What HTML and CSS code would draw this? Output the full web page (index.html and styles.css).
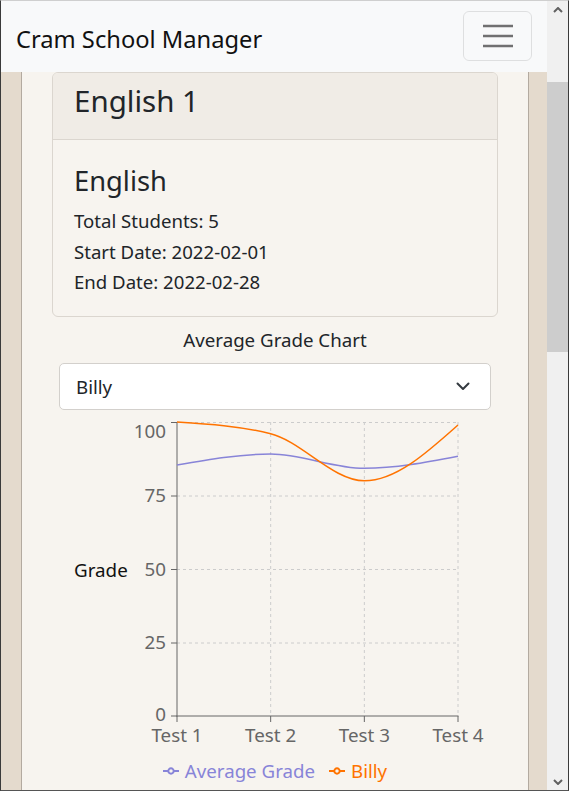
FILE: index.html
```html
<!DOCTYPE html>
<html lang="en">
<head>
<meta charset="utf-8">
<title>Cram School Manager</title>
<link rel="stylesheet" href="styles.css">
</head>
<body>
<div class="window">
  <div class="viewport">
    <nav class="navbar">
      <span class="brand">Cram School Manager</span>
      <button class="toggler" type="button" aria-label="Toggle navigation">
        <svg width="30" height="30" viewBox="0 0 30 30"><path d="M0 5h30M0 15h30M0 25h30" stroke="rgba(0,0,0,0.55)" stroke-width="2.7"/></svg>
      </button>
    </nav>
    <main class="page">
      <section class="card">
        <div class="card-header"><h3 class="card-heading">English 1</h3></div>
        <div class="card-body">
          <h4 class="card-title">English</h4>
          <p class="card-text">Total Students: 5</p>
          <p class="card-text">Start Date: 2022-02-01</p>
          <p class="card-text">End Date: 2022-02-28</p>
        </div>
      </section>
      <section class="chart-section">
        <div class="chart-title">Average Grade Chart</div>
        <div class="select">
          <span>Billy</span>
          <svg class="chev" width="16" height="16" viewBox="0 0 16 16"><path d="M2.5 5.5l5.5 5.5 5.5-5.5" fill="none" stroke="#343a40" stroke-width="2" stroke-linecap="round" stroke-linejoin="round"/></svg>
        </div>
      </section>
      <svg class="chart" width="505" height="345" viewBox="22 410 505 345">
        <g class="grid" stroke="#ccc" stroke-dasharray="3 3" fill="none">
          <path d="M177 422.5H458M177 496H458M177 569.5H458M177 643H458"/>
          <path d="M270.67 422V716M364.33 422V716M458 422V716"/>
        </g>
        <g stroke="#666" fill="none">
          <path d="M177 422V716.5" stroke-width="1"/>
          <path d="M176.5 716H458.5"/>
          <path d="M171 422.5H177M171 496H177M171 569.5H177M171 643H177M171 716H177"/>
          <path d="M177 716V722M270.67 716V722M364.33 716V722M458 716V722"/>
        </g>
        <g class="ticks" fill="#666" text-anchor="end">
          <text x="166" y="438">100</text>
          <text x="166" y="502">75</text>
          <text x="166" y="576">50</text>
          <text x="166" y="649">25</text>
          <text x="166" y="721">0</text>
        </g>
        <g class="ticks" fill="#666" text-anchor="middle">
          <text x="177" y="742">Test 1</text>
          <text x="270.67" y="742">Test 2</text>
          <text x="364.33" y="742">Test 3</text>
          <text x="458" y="742">Test 4</text>
        </g>
        <text class="ylabel" x="74" y="577">Grade</text>
        <path d="M177 465C208.22 459.5 239.45 454 270.67 454C301.89 454 333.11 468.3 364.33 468.3C395.55 468.3 426.78 462.3 458 456.3" fill="none" stroke="#8884d8" stroke-width="1.5"/>
        <path d="M177 422C208.22 423.96 239.45 425.92 270.67 433.76C301.89 441.6 333.11 480.8 364.33 480.8C395.55 480.8 426.78 452.87 458 424.94" fill="none" stroke="#ff7300" stroke-width="1.5"/>
      </svg>
      <div class="legend">
        <span class="legend-item avg">
          <svg width="16" height="16" viewBox="0 0 32 32"><path d="M0 16h10.67A5.33 5.33 0 1 1 21.33 16H32M21.33 16A5.33 5.33 0 1 1 10.67 16" fill="none" stroke="#8884d8" stroke-width="4"/></svg>
          Average Grade
        </span>
        <span class="legend-item billy">
          <svg width="16" height="16" viewBox="0 0 32 32"><path d="M0 16h10.67A5.33 5.33 0 1 1 21.33 16H32M21.33 16A5.33 5.33 0 1 1 10.67 16" fill="none" stroke="#ff7300" stroke-width="4"/></svg>
          Billy
        </span>
      </div>
    </main>
  </div>
  <div class="scrollbar">
    <div class="sb-arrow"><svg width="10" height="6" viewBox="0 0 10 6"><path d="M1 5l4-4 4 4" fill="none" stroke="#606060" stroke-width="2"/></svg></div>
    <div class="sb-track">
      <div class="sb-thumb"></div>
    </div>
    <div class="sb-arrow"><svg width="10" height="6" viewBox="0 0 10 6"><path d="M1 1l4 4 4-4" fill="none" stroke="#606060" stroke-width="2"/></svg></div>
  </div>
</div>
</body>
</html>
```
FILE: styles.css
```css
* { box-sizing: border-box; }
html, body { margin: 0; padding: 0; }
body {
  font-family: "Noto Sans", "Open Sans", sans-serif;
  color: #212529;
  background: #fff;
}
.window {
  width: 569px;
  height: 791px;
  display: flex;
  border-left: 1px solid #3a3a3a;
  border-right: 1px solid #3a3a3a;
  border-top: 1px solid #cfcfcf;
  border-bottom: 1px solid #555;
  overflow: hidden;
}
.viewport {
  width: 546px;
  height: 789px;
  background: #e4dacd;
  overflow: hidden;
  display: flex;
  flex-direction: column;
}
.navbar {
  height: 71px;
  flex: none;
  background: #f8f9fa;
  display: flex;
  align-items: center;
  justify-content: space-between;
  padding: 0 15px 0 15px;
}
.brand {
  font-size: 23.7px;
  color: #111;
  line-height: 30px;
  padding-top: 4px;
}
.toggler {
  width: 69px;
  height: 50px;
  margin-top: -1px;
  border: 1px solid rgba(0,0,0,0.1);
  border-radius: 6px;
  background: transparent;
  display: flex;
  align-items: center;
  justify-content: center;
  padding: 0;
}
.page {
  margin: 0 18px 0 20px;
  flex: 1;
  background: #f7f4ef;
  border-left: 1px solid #b3aaa0;
  border-right: 1px solid #b3aaa0;
  padding: 0 30px;
  overflow: hidden;
}
.card {
  border: 1px solid #dbd6cf;
  border-radius: 6px;
  overflow: hidden;
}
.card-header {
  background: #f0ece6;
  border-bottom: 1px solid #dbd6cf;
  padding: 9px 21px 19px;
}
.card-heading {
  margin: 0;
  font-size: 29.5px;
  font-weight: 400;
  line-height: 38px;
  color: #212529;
}
.card-body {
  padding: 22px 21px 18px;
}
.card-title {
  margin: 0 0 6px;
  font-size: 27.3px;
  font-weight: 400;
  line-height: 38px;
}
.card-text {
  margin: 0;
  font-size: 18.6px;
  line-height: 30.5px;
}
.chart-section {
  padding: 9px 7px 0;
}
.chart-title {
  text-align: center;
  font-size: 18.7px;
  line-height: 27px;
  margin-bottom: 10px;
}
.select {
  height: 47px;
  background: #fff;
  border: 1px solid #d3d0cc;
  border-radius: 5px;
  display: flex;
  align-items: center;
  justify-content: space-between;
  padding: 0 19px 0 16px;
  font-size: 18.7px;
}
.chart {
  display: block;
  margin-left: -30px;
}
.ticks, .ylabel {
  font-family: "Noto Sans", sans-serif;
  font-size: 18.8px;
}
.ylabel { fill: #111; }
.legend {
  margin-left: -30px;
  margin-right: -30px;
  margin-top: 5px;
  display: flex;
  justify-content: center;
  gap: 14px;
  font-size: 18.7px;
  line-height: 22px;
}
.legend-item {
  display: inline-flex;
  align-items: center;
  gap: 6px;
}
.legend-item.avg { color: #8884d8; }
.legend-item.billy { color: #ff7300; }
.scrollbar {
  width: 21px;
  height: 789px;
  background: #f0f0f0;
  display: flex;
  flex-direction: column;
}
.sb-arrow {
  height: 17px;
  display: flex;
  align-items: center;
  justify-content: center;
  flex: none;
}
.sb-track {
  flex: 1;
  padding-top: 64px;
}
.sb-thumb {
  height: 270px;
  background: #cdcdcd;
}
```
